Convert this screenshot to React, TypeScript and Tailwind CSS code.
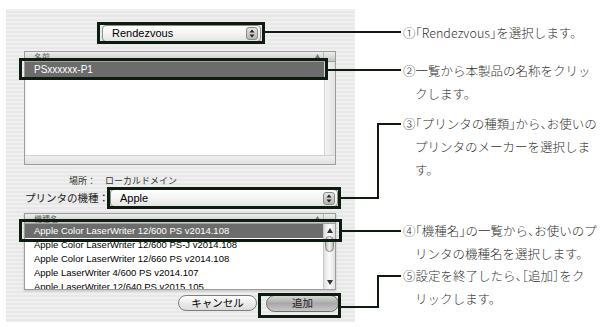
import React from "react";

const UI = "[font-family:'Liberation_Sans','Noto_Sans_CJK_JP',sans-serif]";
const JP = "[font-family:'Noto_Sans_CJK_JP',sans-serif]";

function Arrows() {
  return (
    <span className="mr-[2px] flex h-[13px] w-[12px] items-center justify-center rounded-[3px] border border-[#8a8a8a] bg-[linear-gradient(#e4e4e4,#b4b4b4)]">
      <svg width="6" height="9" viewBox="0 0 6 9">
        <path d="M3 0.5 L5.5 3.5 L0.5 3.5 Z" fill="#222" />
        <path d="M3 8.5 L5.5 5.5 L0.5 5.5 Z" fill="#222" />
      </svg>
    </span>
  );
}

function Popup({ label, className }: { label: string; className: string }) {
  return (
    <div
      className={`flex h-[17px] items-center rounded-[4px] border border-[#8e8e8e] bg-[linear-gradient(#ffffff,#f4f4f4_50%,#e4e4e4)] shadow-[0_1px_1px_rgba(0,0,0,0.15)] ${className}`}
    >
      <span className={`flex-1 pl-[9px] text-[11px] leading-none text-black ${UI}`}>{label}</span>
      <Arrows />
    </div>
  );
}

function Header({ label }: { label: string }) {
  return (
    <div className="relative flex h-[10px] items-center border-b border-[#a0a0a0] bg-[linear-gradient(#eeeeee,#c6c6c6)]">
      <span className={`pl-[9px] text-[8px] leading-none text-[#555] ${JP}`}>{label}</span>
      <svg className="absolute right-[15px] top-[2px]" width="5" height="4" viewBox="0 0 5 4">
        <path d="M2.5 0 L5 4 L0 4 Z" fill="#777" />
      </svg>
      <div className="absolute right-[11px] top-0 h-full w-px bg-[#b8b8b8]" />
    </div>
  );
}

export default function App() {
  const rows = [
    "Apple Color LaserWriter 12/600 PS-J v2014.108",
    "Apple Color LaserWriter 12/660 PS v2014.108",
    "Apple LaserWriter 4/600 PS v2014.107",
    "Apple LaserWriter 12/640 PS v2015.105",
  ];
  return (
    <div className="relative flex h-[327px] w-[605px] overflow-hidden bg-white">
      {/* dialog */}
      <div className="ml-[6px] mt-[9px] flex h-[313px] w-[349px] flex-col bg-[repeating-linear-gradient(180deg,#efefef_0px,#efefef_2px,#e7e7e7_2px,#e7e7e7_4px)] pt-[16px]">
        <Popup label="Rendezvous" className="ml-[96px] w-[159px]" />

        {/* list 1 */}
        <div className="ml-[18px] mt-[9px] flex h-[114px] w-[312px] flex-col border border-[#9c9c9c] bg-white shadow-[inset_0_1px_2px_rgba(0,0,0,0.15)]">
          <Header label="名前" />
          <div className="flex flex-1">
            <div className="flex-1">
              <div className={`flex h-[15px] items-center bg-[#6c6c6c] pl-[9px] text-[10px] leading-none text-white ${UI}`}>
                PSxxxxxx-P1
              </div>
            </div>
            <div className="w-[11px] border-l border-[#d4d4d4] bg-[linear-gradient(90deg,#f4f4f4,#e2e2e2)]" />
          </div>
          <div className="h-[9px] border-t border-[#d0d0d0] bg-[linear-gradient(#f0f0f0,#e0e0e0)]" />
        </div>

        {/* location */}
        <div className={`mt-[8px] flex h-[14px] items-center text-[9px] leading-none text-[#333] ${JP}`}>
          <span className="w-[90px] text-right">場所：</span>
          <span className="ml-[9px]">ローカルドメイン</span>
        </div>

        {/* printer model */}
        <div className="mt-[2px] flex h-[18px] items-center">
          <span className={`ml-[19px] w-[85px] whitespace-nowrap text-[10.5px] leading-none text-[#222] ${JP}`}>プリンタの機種：</span>
          <Popup label="Apple" className="h-[18px] w-[228px]" />
        </div>

        {/* list 2 */}
        <div className="ml-[18px] mt-[6px] flex h-[77px] w-[312px] flex-col overflow-hidden border border-[#9c9c9c] bg-white shadow-[0_1px_2px_rgba(0,0,0,0.2)]">
          <Header label="機種名" />
          <div className="flex flex-1 overflow-hidden">
            <div className="flex-1 overflow-hidden">
              <div className={`flex h-[14px] items-center bg-[#6c6c6c] pl-[9px] text-[9.5px] leading-none text-white ${UI}`}>
                Apple Color LaserWriter 12/600 PS v2014.108
              </div>
              {rows.map((r) => (
                <div key={r} className={`flex h-[14px] items-center pl-[9px] text-[9.5px] leading-none text-black ${UI}`}>
                  {r}
                </div>
              ))}
            </div>
            <div className="flex w-[12px] flex-col items-center border-l border-[#c8c8c8] bg-[linear-gradient(90deg,#e0e0e0,#fbfbfb_50%,#e0e0e0)]">
              <svg className="mt-[4px]" width="6" height="5" viewBox="0 0 6 5">
                <path d="M3 0 L6 5 L0 5 Z" fill="#333" />
              </svg>
              <div className="mt-[3px] h-[16px] w-[9px] rounded-full border border-[#8a8a8a] bg-[linear-gradient(90deg,#bdbdbd,#f2f2f2_50%,#bdbdbd)]" />
              <div className="flex-1" />
              <svg className="mb-[4px]" width="6" height="5" viewBox="0 0 6 5">
                <path d="M3 5 L6 0 L0 0 Z" fill="#333" />
              </svg>
            </div>
          </div>
        </div>

        {/* buttons */}
        <div className="mt-[4px] flex h-[18px] items-center">
          <div className={`ml-[172px] flex h-[16px] w-[79px] items-center justify-center rounded-full border border-[#7e7e7e] bg-[linear-gradient(#ffffff,#ececec_50%,#dcdcdc)] text-[10.5px] leading-none text-black ${JP}`}>
            キャンセル
          </div>
          <div className={`ml-[9px] flex h-[17px] w-[73px] items-center justify-center rounded-full border border-[#6e6e6e] bg-[linear-gradient(#d8d8d8,#a8a8a8_50%,#c8c8c8)] text-[10.5px] leading-none text-[#222] ${JP}`}>
            追加
          </div>
        </div>
      </div>

      {/* annotations */}
      <div className={`ml-[48px] flex flex-col text-[12.5px] font-light leading-[23px] text-[#333] ${JP}`}>
        <div className="mt-[21px] whitespace-nowrap">
          ①<span className="[font-feature-settings:'halt']">「</span>Rendezvous<span className="[font-feature-settings:'halt']">」</span>を選択します。
        </div>
        <div className="mt-[15px] whitespace-nowrap pl-[12px] -indent-[12px]">
          ②一覧から本製品の名称をクリッ
          <br />
          クします。
        </div>
        <div className="mt-[7px] whitespace-nowrap pl-[12px] -indent-[12px]">
          ③<span className="[font-feature-settings:'halt']">「</span>プリンタの種類<span className="[font-feature-settings:'halt']">」</span>から<span className="[font-feature-settings:'halt']">、</span>お使いの
          <br />
          プリンタのメーカーを選択しま
          <br />
          す。
        </div>
        <div className="mt-[38px] whitespace-nowrap pl-[12px] -indent-[12px]">
          ④<span className="[font-feature-settings:'halt']">「</span>機種名<span className="[font-feature-settings:'halt']">」</span>の一覧から<span className="[font-feature-settings:'halt']">、</span>お使いのプ
          <br />
          リンタの機種名を選択します。
        </div>
        <div className="-mt-[1px] whitespace-nowrap pl-[12px] -indent-[12px]">
          ⑤設定を終了したら<span className="[font-feature-settings:'halt']">、［</span>追加<span className="[font-feature-settings:'halt']">］</span>をク
          <br />
          リックします。
        </div>
      </div>

      {/* highlight boxes */}
      <div className="absolute left-[97px] top-[22px] h-[22px] w-[168px] border-[3px] border-[#0e1c0f]" />
      <div className="absolute left-[19px] top-[58px] h-[22px] w-[309px] border-[3px] border-[#0e1c0f]" />
      <div className="absolute left-[107px] top-[187px] h-[22px] w-[234px] border-[3px] border-[#0e1c0f]" />
      <div className="absolute left-[19px] top-[219px] h-[23px] w-[323px] border-[3px] border-[#0e1c0f]" />
      <div className="absolute left-[258px] top-[293px] h-[25px] w-[83px] border-[3px] border-[#0e1c0f]" />

      {/* connector lines */}
      <div className="absolute left-[265px] top-[31px] h-[2px] w-[136px] bg-[#0e1c0f]" />
      <div className="absolute left-[328px] top-[69px] h-[2px] w-[73px] bg-[#0e1c0f]" />
      <div className="absolute left-[341px] top-[197px] h-[2px] w-[38px] bg-[#0e1c0f]" />
      <div className="absolute left-[377px] top-[123px] h-[76px] w-[2px] bg-[#0e1c0f]" />
      <div className="absolute left-[377px] top-[123px] h-[2px] w-[24px] bg-[#0e1c0f]" />
      <div className="absolute left-[342px] top-[230px] h-[2px] w-[59px] bg-[#0e1c0f]" />
      <div className="absolute left-[341px] top-[306px] h-[2px] w-[38px] bg-[#0e1c0f]" />
      <div className="absolute left-[377px] top-[275px] h-[33px] w-[2px] bg-[#0e1c0f]" />
      <div className="absolute left-[377px] top-[275px] h-[2px] w-[24px] bg-[#0e1c0f]" />
    </div>
  );
}
